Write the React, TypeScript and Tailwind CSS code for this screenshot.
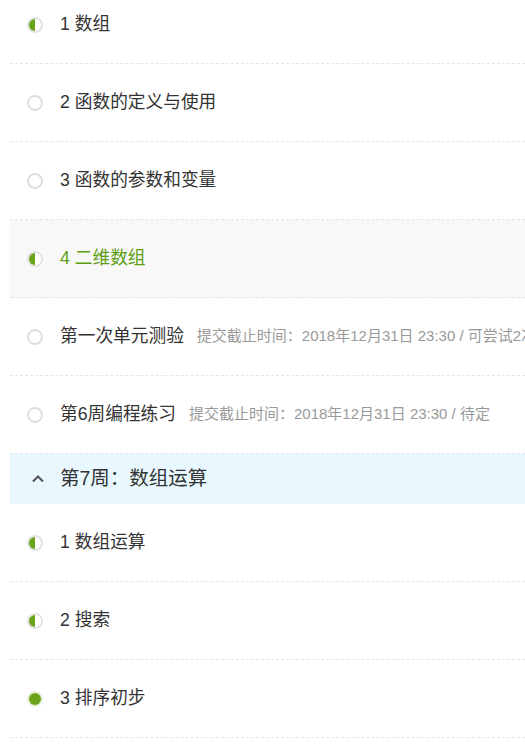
type Status = 'none' | 'half' | 'done'

type Row = {
  title: string
  status: Status
  meta?: string
  active?: boolean
}

const before: Row[] = [
  { title: '1 数组', status: 'half' },
  { title: '2 函数的定义与使用', status: 'none' },
  { title: '3 函数的参数和变量', status: 'none' },
  { title: '4 二维数组', status: 'half', active: true },
  { title: '第一次单元测验', status: 'none', meta: '提交截止时间：2018年12月31日 23:30 / 可尝试2次' },
  { title: '第6周编程练习', status: 'none', meta: '提交截止时间：2018年12月31日 23:30 / 待定' },
]

const after: Row[] = [
  { title: '1 数组运算', status: 'half' },
  { title: '2 搜索', status: 'half' },
  { title: '3 排序初步', status: 'done' },
]

function StatusIcon({ status }: { status: Status }) {
  if (status === 'done') {
    return (
      <span className="flex h-4 w-4 shrink-0 items-center justify-center rounded-full border-2 border-[#e6efd9]">
        <span className="h-3 w-3 rounded-full bg-[#6aa31c]" />
      </span>
    )
  }
  if (status === 'half') {
    return (
      <span className="flex h-4 w-4 shrink-0 items-center justify-center rounded-full border-2 border-[#e3e3e3]">
        <span className="flex h-3 w-3 overflow-hidden rounded-full">
          <span className="h-full w-1/2 bg-[#6aa31c]" />
          <span className="h-full w-1/2 bg-white" />
        </span>
      </span>
    )
  }
  return <span className="h-4 w-4 shrink-0 rounded-full border-2 border-[#dedede]" />
}

function LessonRow({ row }: { row: Row }) {
  return (
    <div
      className={
        'flex h-[78px] items-center overflow-hidden border-b border-dashed border-[#e4e4e4] pl-[17px] ' +
        (row.active ? 'bg-[#f8f8f8]' : 'bg-white')
      }
    >
      <StatusIcon status={row.status} />
      <span
        className={
          'ml-[17px] shrink-0 text-[17.7px] ' + (row.active ? 'text-[#5c9e10]' : 'text-[#333]')
        }
      >
        {row.title}
      </span>
      {row.meta && (
        <span className="ml-[13px] shrink-0 whitespace-nowrap text-[15px] text-[#999]">{row.meta}</span>
      )}
    </div>
  )
}

function App() {
  return (
    <div
      className="h-[754px] w-[525px] overflow-hidden bg-white"
      style={{ fontFamily: '"Liberation Sans", "Noto Sans CJK SC", sans-serif' }}
    >
      <div className="-mt-[14px] ml-[10px]">
        {before.map((r) => (
          <LessonRow key={r.title} row={r} />
        ))}
        <div className="flex h-[50px] items-center bg-[#e9f8ff] pl-[21px]">
          <svg width="14" height="14" viewBox="0 0 14 14" className="text-[#555]">
            <path d="M2 9.5 L7 4.5 L12 9.5" fill="none" stroke="currentColor" strokeWidth="2" />
          </svg>
          <span className="ml-[15px] text-[19.5px] text-[#333]">第7周：数组运算</span>
        </div>
        {after.map((r) => (
          <LessonRow key={r.title} row={r} />
        ))}
      </div>
    </div>
  )
}

export default App
